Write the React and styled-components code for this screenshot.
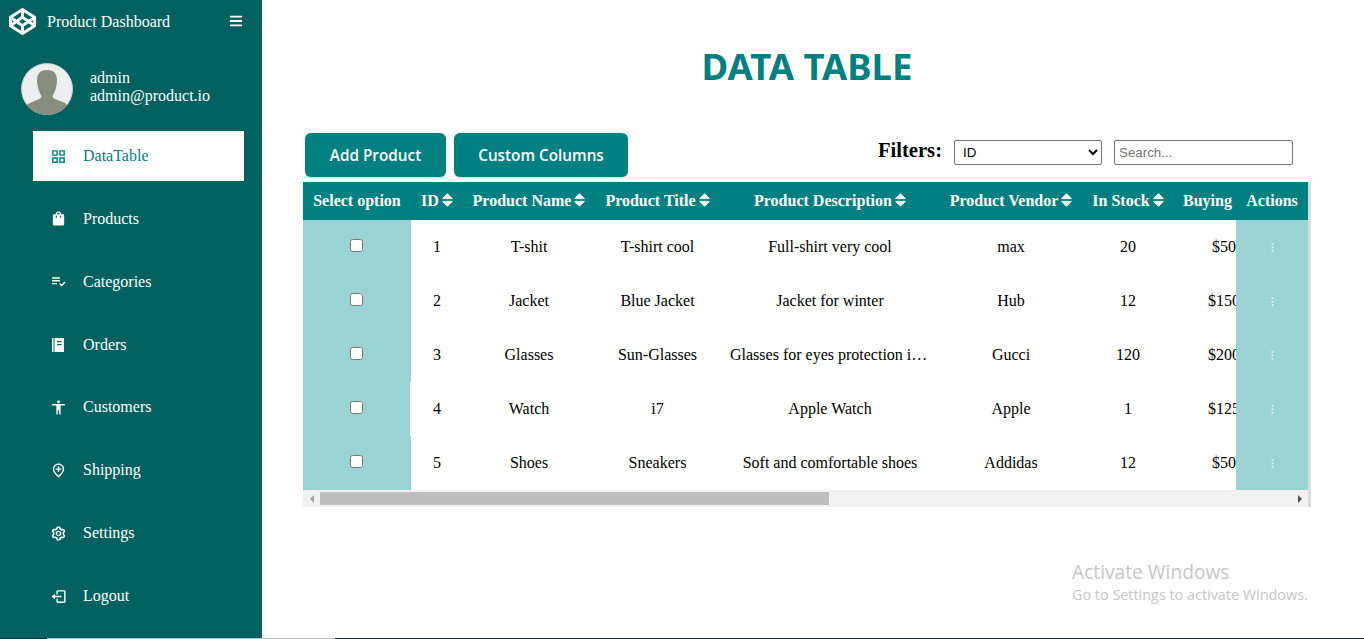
import React from "react";
import styled, { createGlobalStyle } from "styled-components";
import { FaBars } from "react-icons/fa";
import { BsThreeDotsVertical } from "react-icons/bs";
import { BiCog, BiLogOut } from "react-icons/bi";
import {
  MdOutlineGridView,
  MdShoppingBag,
  MdOutlinePlaylistAddCheck,
  MdAccessibility,
  MdOutlineAddLocation,
} from "react-icons/md";

const GlobalStyle = createGlobalStyle`
  html, body {
    margin: 0;
    padding: 0;
    height: 100%;
    overflow: hidden;
    background: #fff;
    font-family: "Liberation Serif", "Times New Roman", serif;
  }
`;

const Page = styled.div`
  position: relative;
  display: flex;
  flex-direction: column;
  width: 1364px;
  height: 639px;
`;
const Body = styled.div`
  display: flex;
  height: 638px;
`;
const Sidebar = styled.aside`
  display: flex;
  flex-direction: column;
  flex: 0 0 262px;
  background: #006160;
  color: #fff;
`;
const Brand = styled.div`
  display: flex;
  align-items: center;
  height: 42px;
  padding: 0 19px 0 8px;
  font-size: 16px;
`;
const BrandName = styled.span`
  flex: 1;
  margin: 2px 0 0 10px;
`;
const Profile = styled.div`
  display: flex;
  align-items: center;
  gap: 17px;
  margin: 21px 0 16px 21px;
  font-size: 16px;
  line-height: 18px;
`;
const ProfileText = styled.div`
  margin-top: -4px;
`;
const Avatar = styled.svg`
  display: block;
  width: 52px;
  height: 52px;
  border-radius: 50%;
`;
const Nav = styled.nav`
  display: flex;
  flex-direction: column;
  gap: 12.86px;
`;
const NavItem = styled.a`
  display: flex;
  align-items: center;
  width: 195px;
  height: 50px;
  margin-left: 33px;
  padding-left: 16px;
  font-size: 16px;
  color: ${(p) => (p.$active ? "#008080" : "#fff")};
  background: ${(p) => (p.$active ? "#fff" : "transparent")};
`;
const NavIcon = styled.span`
  display: flex;
  align-items: center;
  justify-content: center;
  width: 18px;
  height: 18px;
  margin-right: 16px;
  font-size: 17px;
`;
const Main = styled.main`
  flex: 1;
  padding: 0 53px 0 41px;
`;
const Title = styled.h1`
  height: 133px;
  margin: 0;
  padding-top: 41px;
  box-sizing: border-box;
  text-align: center;
  font-family: "Noto Sans", "Open Sans", sans-serif;
  font-size: 36.5px;
  line-height: 50px;
  font-weight: 700;
  color: #008080;
`;
const Toolbar = styled.div`
  display: flex;
  justify-content: space-between;
  height: 49px;
  padding: 0 18px 0 2px;
`;
const Buttons = styled.div`
  display: flex;
  gap: 8px;
`;
const Button = styled.button`
  width: ${(p) => p.$width}px;
  height: 44px;
  border: none;
  border-radius: 6px;
  background: #008080;
  color: #fff;
  font-family: "Open Sans", sans-serif;
  font-size: 15.3px;
  font-weight: 600;
  box-shadow: 0 1px 2px rgba(0, 0, 0, 0.2);
`;
const Filters = styled.div`
  display: flex;
  gap: 12px;
  padding-top: 7px;
`;
const FilterLabel = styled.label`
  margin-top: -2px;
  font-size: 20.6px;
  line-height: 24px;
  font-weight: 700;
  color: #000;
`;
const FilterSelect = styled.select`
  width: 148px;
  height: 25px;
  box-sizing: border-box;
  padding-left: 4px;
  border: 1px solid #767676;
  border-radius: 2px;
  background: #fff;
  font-family: "Liberation Sans", Arial, sans-serif;
  font-size: 13.33px;
`;
const SearchInput = styled.input`
  width: 179px;
  height: 25px;
  box-sizing: border-box;
  padding: 1px 4px;
  border: 1px solid #767676;
  border-radius: 2px;
  font-family: "Liberation Sans", Arial, sans-serif;
  font-size: 13.33px;
  &::placeholder {
    color: #757575;
  }
`;
const TableFrame = styled.div`
  width: 1005px;
  border-right: 3px solid #dcdcdc;
`;
const TableClip = styled.div`
  overflow: hidden;
`;
const Table = styled.table`
  table-layout: fixed;
  width: 1043px;
  border-collapse: collapse;
  font-size: 16px;
`;
const HeadCell = styled.th`
  height: 38px;
  padding: 0 0 0 ${(p) => p.$inset || 0}px;
  box-sizing: border-box;
  width: ${(p) => p.$width}px;
  background: #008080;
  color: #fff;
  font-size: 16px;
  font-weight: 700;
  text-align: ${(p) => (p.$inset ? "left" : "center")};
  white-space: nowrap;
  overflow: hidden;
  ${(p) => p.$sticky && "position: sticky; right: 0;"}
`;
const SortSvg = styled.svg`
  display: inline-block;
  width: 11px;
  height: 14px;
  margin-left: 3px;
  vertical-align: -1px;
`;
const Cell = styled.td`
  height: 54px;
  padding: 0 10px;
  box-sizing: border-box;
  text-align: center;
  color: #000;
  white-space: nowrap;
  overflow: hidden;
  text-overflow: ellipsis;
`;
const PriceCell = styled(Cell)`
  padding: 0;
  text-overflow: clip;
`;
const SelectCell = styled(Cell)`
  background: #99d3d3;
  padding: 0;
  ${(p) => p.$notch && "box-shadow: inset -1px 0 0 #fff;"}
`;
const ActionCell = styled(Cell)`
  position: sticky;
  right: 0;
  padding: 0;
  background: #99d3d3;
  color: #fff;
`;
const RowCheck = styled.input`
  display: block;
  width: 13px;
  height: 13px;
  margin: -4px auto 0 47px;
`;
const DotsIcon = styled(BsThreeDotsVertical)`
  display: block;
  margin: 0 auto;
  font-size: 11px;
  opacity: 0.7;
`;
const ScrollBar = styled.div`
  display: flex;
  align-items: center;
  height: 17px;
  background: #f1f1f1;
`;
const ScrollArrow = styled.span`
  display: flex;
  align-items: center;
  justify-content: center;
  flex: 0 0 17px;
  &::before {
    content: "";
    border-style: solid;
    border-color: transparent;
    border-width: 4px 0 4px 4px;
    border-left-color: ${(p) => p.$color};
    transform: ${(p) => (p.$left ? "rotate(180deg)" : "none")};
  }
`;
const ScrollThumb = styled.div`
  width: 509px;
  height: 13px;
  background: #bebebe;
`;
const ScrollSpacer = styled.div`
  flex: 1;
`;
const Watermark = styled.div`
  position: absolute;
  left: 1072px;
  top: 559px;
  font-family: "Open Sans", sans-serif;
  color: #c6c6c6;
  font-size: 14.4px;
  line-height: 19px;
`;
const WatermarkTitle = styled.div`
  font-size: 19.2px;
  line-height: 26px;
`;
const BottomEdge = styled.div`
  display: flex;
  height: 1px;
`;
const EdgePart = styled.div`
  width: ${(p) => p.$width};
  flex: ${(p) => (p.$grow ? 1 : "none")};
  background: ${(p) => p.$color};
`;

const OrdersIcon = () => (
  <svg width="16" height="16" viewBox="0 0 16 16" fill="#fff" fillRule="evenodd">
    <path d="M2 1h1.5v14H2zM4.5 1H14v14H4.5zM7 4v1.2h4.5V4zM7 7v1.2h4.5V7z" />
  </svg>
);

const SortIcon = () => (
  <SortSvg viewBox="0 0 11 14" fill="#fff" stroke="#fff" strokeWidth="1" strokeLinejoin="round">
    <path d="M5.5 .7L10.3 5.6H.7zM.7 8.4h9.6L5.5 13.3z" />
  </SortSvg>
);

const navItems = [
  { label: "DataTable", icon: MdOutlineGridView, active: true },
  { label: "Products", icon: MdShoppingBag },
  { label: "Categories", icon: MdOutlinePlaylistAddCheck },
  { label: "Orders", icon: OrdersIcon },
  { label: "Customers", icon: MdAccessibility },
  { label: "Shipping", icon: MdOutlineAddLocation },
  { label: "Settings", icon: BiCog },
  { label: "Logout", icon: BiLogOut },
];

const columns = [
  { label: "ID", width: 52 },
  { label: "Product Name", width: 132 },
  { label: "Product Title", width: 125 },
  { label: "Product Description", width: 220 },
  { label: "Product Vendor", width: 142 },
  { label: "In Stock", width: 92 },
  { label: "Buying Price", width: 100, inset: 9 },
];

const products = [
  ["1", "T-shit", "T-shirt cool", "Full-shirt very cool", "max", "20", "$50"],
  ["2", "Jacket", "Blue Jacket", "Jacket for winter", "Hub", "12", "$150"],
  ["3", "Glasses", "Sun-Glasses", "Glasses for eyes protection in sunlight", "Gucci", "120", "$200"],
  ["4", "Watch", "i7", "Apple Watch", "Apple", "1", "$125"],
  ["5", "Shoes", "Sneakers", "Soft and comfortable shoes", "Addidas", "12", "$50"],
];

const Logo = () => (
  <svg width="29" height="29" viewBox="0 0 24 24" fill="none" stroke="#fff" strokeWidth="2.4" strokeLinejoin="round">
    <path d="M12 2l10 6.5v7L12 22 2 15.5v-7z" />
    <path d="M12 2v6.5M12 15.5V22M2 8.5l10 7 10-7M2 15.5l10-7 10 7" />
  </svg>
);

const AvatarImage = () => (
  <Avatar viewBox="0 0 52 52">
    <circle cx="26" cy="26" r="26" fill="#eeeeee" />
    <circle cx="26" cy="26" r="25.5" fill="none" stroke="#b9c9c6" />
    <path
      d="M26 7c7 0 10 4 10 10 0 6-2 12-4 15-1 2 0 3 2 4l10 4c2 2 3 3 4 4-4 5-11 8-22 8S8 49 4 44c1-1 2-3 5-4l9-4c2-1 3-2 2-4-2-3-4-9-4-15 0-6 3-10 10-10z"
      fill="#878e7e"
    />
  </Avatar>
);

const App = () => {
  return (
    <Page>
      <GlobalStyle />
      <Body>
        <Sidebar>
          <Brand>
            <Logo />
            <BrandName>Product Dashboard</BrandName>
            <FaBars size={14} />
          </Brand>
          <Profile>
            <AvatarImage />
            <ProfileText>
              <div>admin</div>
              <div>admin@product.io</div>
            </ProfileText>
          </Profile>
          <Nav>
            {navItems.map((item) => (
              <NavItem key={item.label} $active={item.active}>
                <NavIcon>
                  <item.icon />
                </NavIcon>
                {item.label}
              </NavItem>
            ))}
          </Nav>
        </Sidebar>
        <Main>
          <Title>DATA TABLE</Title>
          <Toolbar>
            <Buttons>
              <Button $width={141}>Add Product</Button>
              <Button $width={174}>Custom Columns</Button>
            </Buttons>
            <Filters>
              <FilterLabel>Filters:</FilterLabel>
              <FilterSelect defaultValue="ID">
                <option>ID</option>
                <option>Product Name</option>
              </FilterSelect>
              <SearchInput placeholder="Search..." />
            </Filters>
          </Toolbar>
          <TableFrame>
            <TableClip>
              <Table>
                <thead>
                  <tr>
                    <HeadCell $width={108}>Select option</HeadCell>
                    {columns.map((col) => (
                      <HeadCell key={col.label} $width={col.width} $inset={col.inset}>
                        {col.label}
                        <SortIcon />
                      </HeadCell>
                    ))}
                    <HeadCell $width={72} $sticky>
                      Actions
                    </HeadCell>
                  </tr>
                </thead>
                <tbody>
                  {products.map((row) => (
                    <tr key={row[0]}>
                      <SelectCell $notch={row[0] === "4"}>
                        <RowCheck type="checkbox" />
                      </SelectCell>
                      {row.slice(0, 6).map((value, i) => (
                        <Cell key={i}>{value}</Cell>
                      ))}
                      <PriceCell>{row[6]}</PriceCell>
                      <ActionCell>
                        <DotsIcon />
                      </ActionCell>
                    </tr>
                  ))}
                </tbody>
              </Table>
            </TableClip>
            <ScrollBar>
              <ScrollArrow $left $color="#a3a3a3" />
              <ScrollThumb />
              <ScrollSpacer />
              <ScrollArrow $color="#505050" />
            </ScrollBar>
          </TableFrame>
        </Main>
      </Body>
      <BottomEdge>
        <EdgePart $width="47px" $color="#1f2d33" />
        <EdgePart $width="288px" $color="#bcbcbc" />
        <EdgePart $grow $color="#1f2d33" />
      </BottomEdge>
      <Watermark>
        <WatermarkTitle>Activate Windows</WatermarkTitle>
        Go to Settings to activate Windows.
      </Watermark>
    </Page>
  );
};

export default App;
